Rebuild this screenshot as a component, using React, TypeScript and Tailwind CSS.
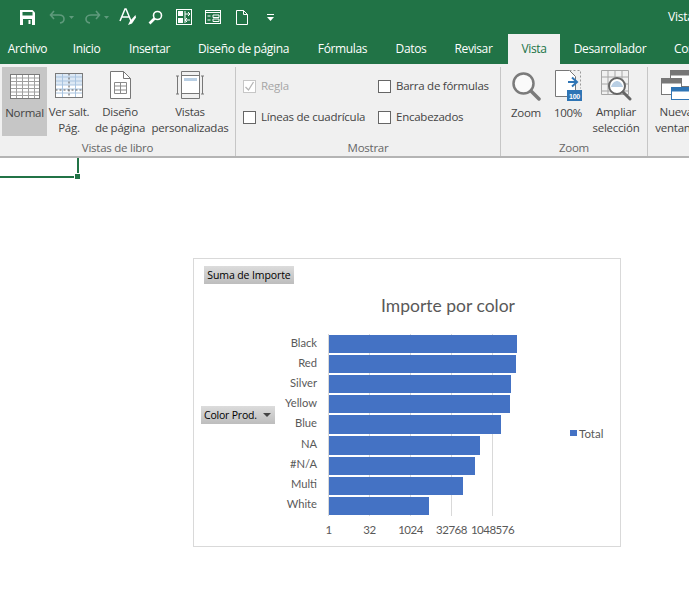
import React from "react";

const bars = [
  { name: "Black", w: 188, h: "h-[18px]" },
  { name: "Red", w: 187, h: "h-[18px]" },
  { name: "Silver", w: 182, h: "h-[18px]" },
  { name: "Yellow", w: 181, h: "h-[18px]" },
  { name: "Blue", w: 172, h: "h-[19px]" },
  { name: "NA", w: 151, h: "h-[19px]" },
  { name: "#N/A", w: 146, h: "h-[18px]" },
  { name: "Multi", w: 134, h: "h-[18px]" },
  { name: "White", w: 100, h: "h-[18px]" },
];

const ticks = ["1", "32", "1024", "32768", "1048576"];

const TableIcon = () => (
  <svg width="30" height="25" viewBox="0 0 30 25" fill="none">
    <rect x="0.5" y="0.5" width="29" height="24" fill="#fff" />
    <path d="M0.500 4h29M0.500 7.500h29M0.500 11h29M0.500 14.500h29M0.500 18h29M0.500 21.500h29M6.500 0.500v24M12.500 0.500v24M18.500 0.500v24M24.500 0.500v24" stroke="#a0a0a0" />
    <rect x="0.500" y="0.500" width="29" height="24" stroke="#7a7a7a" />
  </svg>
);

const PageBreakIcon = () => (
  <svg width="28" height="25" viewBox="0 0 28 25" fill="none">
    <rect x="0.500" y="0.500" width="27" height="24" fill="#fff" />
    <rect x="1" y="1" width="26" height="11" fill="#dce8f4" />
    <path d="M0.500 4h27M0.500 8h27M0.500 12h27M0.500 16h27M0.500 20h27M7.500 0.500v24M20.500 0.500v24" stroke="#a9c4e0" />
    <path d="M14 0.500v24M0.500 17h27" stroke="#555" strokeDasharray="2 2" />
    <rect x="0.500" y="0.500" width="27" height="24" stroke="#7a7a7a" />
  </svg>
);

const PageIcon = () => (
  <svg width="21" height="28" viewBox="0 0 21 28" fill="none">
    <path d="M0.500 0.500h13l7 7v20h-20z" fill="#fff" stroke="#777" />
    <path d="M13.500 0.500v7h7" stroke="#777" />
    <path d="M4.500 11.500h12v11h-12zM4.500 15h12M4.500 19h12M10.500 11.500v11" stroke="#8a8a8a" />
  </svg>
);

const CustomViewIcon = () => (
  <svg width="28" height="28" viewBox="0 0 28 28" fill="none">
    <path d="M5.500 4v-3.500h18v3.500M5.500 23v4.500h18V23" stroke="#777" />
    <path d="M1.500 5v18M0 5h3M0 23h3M26.500 5v18M25 5h3M25 23h3" stroke="#777" />
    <rect x="5.500" y="4.500" width="18" height="18" fill="#fff" stroke="#777" />
    <rect x="8" y="7" width="13" height="3" fill="#b9cfe4" />
  </svg>
);

const ZoomIcon = () => (
  <svg width="29" height="29" viewBox="0 0 29 29" fill="none">
    <circle cx="11.500" cy="11.500" r="10" fill="#fafafa" stroke="#7b7b7b" strokeWidth="2.500" />
    <path d="M19 19l8 8" stroke="#7b7b7b" strokeWidth="3.500" strokeLinecap="round" />
  </svg>
);

const HundredIcon = () => (
  <svg width="27" height="32" viewBox="0 0 27 32" fill="none">
    <path d="M0.500 0.500h14l6 6v20h-20z" fill="#fff" stroke="#777" />
    <path d="M14.500 0.500h11v18" stroke="#999" strokeDasharray="2 2" />
    <path d="M13 12h8M17 7.500l5 4.500-5 4.500" stroke="#2f75b5" strokeWidth="2" />
    <rect x="12" y="20" width="15" height="11" fill="#2f75b5" />
    <text x="19.500" y="28.500" textAnchor="middle" fontSize="7" fontWeight="700" fill="#fff" fontFamily="Liberation Sans">100</text>
  </svg>
);

const ZoomSelectionIcon = () => (
  <svg width="31" height="31" viewBox="0 0 31 31" fill="none">
    <path d="M0.500 0.500h27v24h-27zM0.500 7h27M0.500 14h27M0.500 21h27M7 0.500v24M14 0.500v24M21 0.500v24" stroke="#a6a6a6" />
    <circle cx="16" cy="16" r="8" fill="#fff" stroke="#666" strokeWidth="2" />
    <path d="M10 17c1-4 4-6 6-6s5 2 6 6z" fill="#b9cfe4" />
    <path d="M22 22l7 7" stroke="#666" strokeWidth="3" strokeLinecap="round" />
  </svg>
);

const NewWindowIcon = () => (
  <svg width="30" height="30" viewBox="0 0 30 30" fill="none">
    <rect x="9.500" y="0.500" width="20" height="16" fill="#fff" stroke="#777" />
    <rect x="9.500" y="0.500" width="20" height="5" fill="#777" />
    <rect x="0.500" y="8.500" width="20" height="16" fill="#fff" stroke="#777" />
    <rect x="0.500" y="8.500" width="20" height="5" fill="#777" />
    <rect x="10.500" y="17.500" width="20" height="12" fill="#fff" stroke="#2f75b5" />
    <rect x="10.500" y="17.500" width="20" height="4" fill="#2f75b5" />
  </svg>
);

const RibbonButton = ({
  width,
  icon,
  lines,
  active,
}: {
  width: string;
  icon: React.ReactNode;
  lines: string[];
  active?: boolean;
}) => (
  <div className={`${width} h-[69px] shrink-0 flex flex-col items-center ${active ? "bg-[#c6c6c6]" : ""}`}>
    <div className="h-[38px] flex items-center justify-center">{icon}</div>
    {lines.map((line) => (
      <div key={line} className="h-[16.500px] leading-[16px] whitespace-nowrap text-[#444444]">
        {line}
      </div>
    ))}
  </div>
);

const Check = ({ label, disabled }: { label: string; disabled?: boolean }) => (
  <div className={`flex items-center gap-[5px] h-[16px] whitespace-nowrap ${disabled ? "text-[#a6a6a6]" : "text-[#444444]"}`}>
    <div className={`w-[13px] h-[13px] border bg-white flex items-center justify-center ${disabled ? "border-[#c6c6c6]" : "border-[#666666]"}`}>
      {disabled && (
        <svg width="11" height="11" viewBox="0 0 11 11" fill="none" stroke="#b5b5b5" strokeWidth="1.300">
          <path d="M1.500 6l3 3 5-8" />
        </svg>
      )}
    </div>
    {label}
  </div>
);

const Group = ({
  width,
  label,
  children,
}: {
  width: string;
  label: string;
  children: React.ReactNode;
}) => (
  <div className={`${width} shrink-0 h-[89px] flex flex-col border-r border-[#c6c6c6]`}>
    <div className="flex h-[73px]">{children}</div>
    <div className="text-center leading-[16px] text-[#666666]">{label}</div>
  </div>
);

const Tab = ({ width, label }: { width: string; label: string }) => (
  <div className={`${width} shrink-0 text-center whitespace-nowrap`}>{label}</div>
);

export default function App() {
  return (
    <div className="w-[689px] h-[589px] overflow-hidden bg-white text-[11.500px] tracking-[-0.25px] font-['Open_Sans',sans-serif]">
      {/* title bar */}
      <div className="h-[34px] bg-[#217346] flex items-center text-white">
        <svg className="ml-[20px] shrink-0" width="15" height="15" viewBox="0 0 15 15" fill="none">
          <path d="M0 0h12.500L15 2.500V15H0z" fill="#fff" />
          <rect x="2.500" y="2" width="10" height="3.500" fill="#217346" />
          <rect x="3" y="9" width="9" height="6" fill="#217346" />
          <rect x="8.500" y="10" width="2" height="4" fill="#fff" />
        </svg>
        <svg className="ml-[14px] shrink-0" width="17" height="14" viewBox="0 0 17 14" fill="none" stroke="#5f9a7c" strokeWidth="1.600">
          <path d="M5 1L1.500 5 5 9M1.500 5H10c4 0 5 2.500 5 4s-1 3.500-4 4" />
        </svg>
        <svg className="ml-[3px] shrink-0" width="5" height="3" viewBox="0 0 5 3" fill="#5f9a7c">
          <path d="M0 0h5L2.500 3z" />
        </svg>
        <svg className="ml-[10px] shrink-0" width="17" height="14" viewBox="0 0 17 14" fill="none" stroke="#5f9a7c" strokeWidth="1.600">
          <path d="M12 1l3.500 4L12 9M15.500 5H7C3 5 2 7.500 2 9s1 3.500 4 4" />
        </svg>
        <svg className="ml-[3px] shrink-0" width="5" height="3" viewBox="0 0 5 3" fill="#5f9a7c">
          <path d="M0 0h5L2.500 3z" />
        </svg>
        <svg className="ml-[10px] shrink-0" width="18" height="18" viewBox="0 0 18 18" fill="none">
          <path d="M1 13L6 1h1l5 12M3 9h7" stroke="#fff" strokeWidth="1.500" />
          <path d="M16.500 7L11 13l-2 4 4-1.500 4-6z" fill="#fff" />
        </svg>
        <svg className="ml-[11px] shrink-0" width="15" height="15" viewBox="0 0 15 15" fill="none" stroke="#fff">
          <circle cx="9.500" cy="5.500" r="4" strokeWidth="1.600" />
          <path d="M6.500 8.500L1.500 13.500" strokeWidth="2.600" />
        </svg>
        <svg className="ml-[13px] shrink-0" width="16" height="16" viewBox="0 0 16 16" fill="none">
          <rect x="0.500" y="0.500" width="15" height="15" stroke="#fff" />
          <path d="M2 2h5v5H2zM2 9h5v5H2z" fill="#fff" />
          <path d="M9 5h5M12 3l2 2-2 2M14 11H9M11 9l-2 2 2 2M9 2v12" stroke="#fff" />
        </svg>
        <svg className="ml-[13px] shrink-0" width="16" height="16" viewBox="0 0 16 16" fill="none" stroke="#fff">
          <rect x="0.500" y="1.500" width="15" height="13" />
          <path d="M0.500 3.500h15M2.500 7h3M2.500 11h3M8 6h6v2.500H8zM8 10h6v2.500H8z" />
        </svg>
        <svg className="ml-[15px] shrink-0" width="12" height="15" viewBox="0 0 12 15" fill="none" stroke="#fff">
          <path d="M0.500 0.500h7l4 4v10h-11zM7.500 0.500v4h4" />
        </svg>
        <svg className="ml-[19px] shrink-0" width="7" height="7" viewBox="0 0 7 7" fill="#fff">
          <path d="M0 0h7v1H0zM0 3h7L3.500 7z" />
        </svg>
        <div className="ml-[394px] shrink-0 whitespace-nowrap text-[12px]">Vista</div>
      </div>

      {/* tabs */}
      <div className="h-[30px] bg-[#217346] flex text-white leading-[30px] text-[12px] tracking-[-0.35px]">
        <Tab width="w-[55px]" label="Archivo" />
        <Tab width="w-[63px]" label="Inicio" />
        <Tab width="w-[63px]" label="Insertar" />
        <Tab width="w-[125px]" label="Diseño de página" />
        <Tab width="w-[73px]" label="Fórmulas" />
        <Tab width="w-[64px]" label="Datos" />
        <Tab width="w-[61px]" label="Revisar" />
        <div className="ml-[4px] w-[52px] shrink-0 text-center bg-[#f0f0f0] text-[#217346]">Vista</div>
        <Tab width="w-[100px]" label="Desarrollador" />
        <div className="ml-[14px] shrink-0">Complementos</div>
      </div>

      {/* ribbon */}
      <div className="h-[94px] bg-[#f0f0f0] border-b-2 border-[#b4b4b4] pt-[3px] flex">
        <Group width="w-[236px]" label="Vistas de libro">
          <div className="ml-[2px] flex">
            <RibbonButton width="w-[45px]" active icon={<TableIcon />} lines={["Normal"]} />
            <RibbonButton width="w-[44px]" icon={<PageBreakIcon />} lines={["Ver salt.", "Pág."]} />
            <RibbonButton width="w-[58px]" icon={<PageIcon />} lines={["Diseño", "de página"]} />
            <RibbonButton width="w-[82px]" icon={<CustomViewIcon />} lines={["Vistas", "personalizadas"]} />
          </div>
        </Group>
        <Group width="w-[265px]" label="Mostrar">
          <div className="ml-[7px] mt-[11px] grid grid-cols-[135px_1fr] gap-y-[15px] h-[47px]">
            <Check label="Regla" disabled />
            <Check label="Barra de fórmulas" />
            <Check label="Líneas de cuadrícula" />
            <Check label="Encabezados" />
          </div>
        </Group>
        <Group width="w-[147px]" label="Zoom">
          <RibbonButton width="w-[50px]" icon={<ZoomIcon />} lines={["Zoom"]} />
          <RibbonButton width="w-[34px]" icon={<HundredIcon />} lines={["100%"]} />
          <RibbonButton width="w-[62px]" icon={<ZoomSelectionIcon />} lines={["Ampliar", "selección"]} />
        </Group>
        <div className="w-[56px] shrink-0">
          <RibbonButton width="w-[56px]" icon={<NewWindowIcon />} lines={["Nueva", "ventana"]} />
        </div>
      </div>

      {/* sheet */}
      <div className="relative w-[79px] h-[20px] border-b-2 border-r-2 border-[#217346]">
        <div className="absolute right-[-4px] bottom-[-4px] w-[5px] h-[5px] bg-[#217346] border border-white box-content" />
      </div>

      {/* pivot chart */}
      <div className="ml-[193px] mt-[80px] w-[428px] h-[289px] border border-[#d9d9d9] flex flex-col font-['Lato',sans-serif] text-[#595959] text-[11.500px] tracking-normal">
        <div className="ml-[10px] mt-[7px] w-[90px] h-[18px] bg-gradient-to-b from-[#dcdcdc] to-[#bdbdbd] text-black leading-[18px] text-center font-['Open_Sans',sans-serif] text-[10.500px] tracking-[-0.1px] whitespace-nowrap">
          Suma de Importe
        </div>
        <div className="ml-[135px] mt-[12px] w-[238px] h-[20px] text-center leading-[20px] text-[17.500px] whitespace-nowrap">
          Importe por color
        </div>
        <div className="mt-[18px] flex h-[182px]">
          <div className="w-[81px] pl-[7px] pt-[72px] shrink-0">
            <div className="w-[74px] h-[18px] bg-gradient-to-b from-[#dcdcdc] to-[#bdbdbd] text-black font-['Open_Sans',sans-serif] text-[10.500px] tracking-[-0.2px] leading-[18px] pl-[3px] flex items-center whitespace-nowrap">
              Color Prod.
              <svg className="ml-[6px]" width="8" height="4" viewBox="0 0 8 4" fill="#444">
                <path d="M0 0h8L4 4z" />
              </svg>
            </div>
          </div>
          <div className="w-[42px] shrink-0 text-right text-[11.200px]">
            {bars.map((b) => (
              <div key={b.name} className="h-[20.120px] leading-[18px]">
                {b.name}
              </div>
            ))}
          </div>
          <div className="ml-[11px] relative w-[190px] shrink-0 border-l border-[#d9d9d9]">
            <div className="absolute left-[40px] top-0 bottom-0 w-px bg-[#d9d9d9]" />
            <div className="absolute left-[81px] top-0 bottom-0 w-px bg-[#d9d9d9]" />
            <div className="absolute left-[122px] top-0 bottom-0 w-px bg-[#d9d9d9]" />
            <div className="absolute left-[163px] top-0 bottom-0 w-px bg-[#d9d9d9]" />
            <div className="relative pt-[1px] flex flex-col gap-[2px]">
              {bars.map((b) => (
                <div key={b.name} className={`${b.h} bg-[#4472c4]`} style={{ width: b.w }} />
              ))}
            </div>
          </div>
          <div className="ml-[52px] pt-[93px] shrink-0 flex items-start gap-[2px] leading-[13px]">
            <div className="w-[7px] h-[6px] mt-[3px] bg-[#4472c4]" />
            Total
          </div>
        </div>
        <div className="ml-[114px] mt-[6px] flex tracking-[-0.5px]">
          {ticks.map((t) => (
            <div key={t} className="w-[41px] shrink-0 flex justify-center whitespace-nowrap leading-[16px]">
              {t}
            </div>
          ))}
        </div>
      </div>
    </div>
  );
}
